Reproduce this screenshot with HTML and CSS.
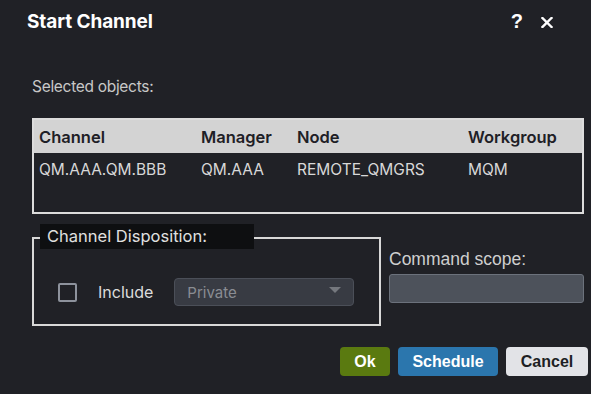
FILE: index.html
```html
<!DOCTYPE html>
<html>
<head>
<meta charset="utf-8">
<link rel="stylesheet" href="styles.css">
</head>
<body>
<div class="dialog">
  <div class="header">
    <div class="title">Start Channel</div>
    <div class="hicons">
      <span class="help">?</span>
      <svg class="close" width="12" height="11" viewBox="0 0 12 11"><path d="M1.5 1 L10.5 10 M10.5 1 L1.5 10" stroke="#fff" stroke-width="2.4" stroke-linecap="square"/></svg>
    </div>
  </div>
  <div class="body">
    <div class="label-sel">Selected objects:</div>
    <div class="table">
      <div class="trow thead">
        <div class="c1">Channel</div><div class="c2">Manager</div><div class="c3">Node</div><div class="c4">Workgroup</div>
      </div>
      <div class="trow tbody">
        <div class="c1">QM.AAA.QM.BBB</div><div class="c2">QM.AAA</div><div class="c3">REMOTE_QMGRS</div><div class="c4">MQM</div>
      </div>
    </div>
    <div class="lower">
      <div class="fieldset">
        <div class="legend">Channel Disposition:</div>
        <div class="disp">
          <span class="checkbox"></span>
          <span class="inc">Include</span>
          <div class="select"><span>Private</span><span class="arrow"></span></div>
        </div>
      </div>
      <div class="scope">
        <div class="scope-label">Command scope:</div>
        <div class="scope-input"></div>
      </div>
    </div>
    <div class="buttons">
      <button class="btn ok">Ok</button>
      <button class="btn sched">Schedule</button>
      <button class="btn cancel">Cancel</button>
    </div>
  </div>
</div>
</body>
</html>
```
FILE: styles.css
```css
html, body {
  margin: 0;
  padding: 0;
  background: #202126;
  width: 591px;
  height: 394px;
  overflow: hidden;
  font-family: Inter, "Noto Sans", sans-serif;
}
.dialog {
  width: 591px;
  height: 394px;
}
.header {
  display: flex;
  justify-content: space-between;
  align-items: center;
  height: 42px;
  padding: 0 38px 0 27px;
}
.title {
  color: #ffffff;
  font-size: 19px;
  font-weight: 700;
  letter-spacing: -0.1px;
}
.hicons {
  display: flex;
  align-items: center;
  gap: 18px;
}
.help {
  color: #fff;
  font-family: "Liberation Sans", sans-serif;
  font-weight: 700;
  font-size: 20px;
}
.close {
  display: block;
  margin-top: 2px;
}
.body {
  padding: 35px 3px 0 32px;
}
.label-sel {
  color: #c8c8c8;
  font-size: 15.5px;
  letter-spacing: -0.3px;
  line-height: 20px;
}
.table {
  margin-top: 21px;
  width: 552px;
  height: 96px;
  box-sizing: border-box;
  border: 2px solid #dcdcdc;
  background: #202126;
}
.trow {
  display: flex;
  align-items: center;
  padding-left: 5px;
}
.thead {
  background: #d3d3d3;
  color: #1e2026;
  font-weight: 600;
  font-size: 16.5px;
  height: 33px;
}
.tbody {
  color: #d8d8d8;
  font-size: 15.5px;
  height: 32px;
}
.c1 { width: 162px; }
.c2 { width: 96px; }
.c3 { width: 171px; }
.c4 { width: 100px; }
.lower {
  display: grid;
  grid-template-columns: 349px 195px;
  column-gap: 8px;
  margin-top: 11px;
}
.fieldset {
  position: relative;
  margin-top: 12px;
  height: 89px;
  box-sizing: border-box;
  border: 2px solid #d8d8d8;
}
.legend {
  position: absolute;
  left: 6px;
  top: -15px;
  width: 214px;
  height: 25px;
  box-sizing: border-box;
  padding-left: 7px;
  background: #0e0f11;
  color: #e0e0e0;
  font-size: 16.5px;
  line-height: 24px;
}
.disp {
  display: flex;
  align-items: center;
  padding: 39px 0 0 24px;
}
.checkbox {
  width: 19px;
  height: 19px;
  box-sizing: border-box;
  border: 2px solid #8d929c;
  border-radius: 2px;
}
.inc {
  margin-left: 21px;
  color: #dcdcdc;
  font-size: 16px;
}
.select {
  margin-left: 21px;
  width: 180px;
  height: 28px;
  box-sizing: border-box;
  border: 1px solid #4b4f58;
  border-radius: 4px;
  background: #383b43;
  display: flex;
  align-items: center;
  justify-content: space-between;
  padding: 0 12px 0 12px;
  color: #8a8d93;
  font-size: 15px;
}
.arrow {
  width: 0;
  height: 0;
  border-left: 6px solid transparent;
  border-right: 6px solid transparent;
  border-top: 6px solid #75787e;
  margin-top: -4px;
}
.scope-label {
  color: #cfcfcf;
  font-family: "Liberation Sans", sans-serif;
  font-size: 17.5px;
  line-height: 20px;
  margin-top: 24px;
}
.scope-input {
  margin-top: 5px;
  height: 29px;
  box-sizing: border-box;
  border: 1px solid #6c727c;
  border-radius: 3px;
  background: #4d525b;
}
.buttons {
  display: flex;
  justify-content: flex-end;
  gap: 8px;
  margin-top: 21px;
}
.btn {
  height: 29px;
  border: none;
  border-radius: 4px;
  font-family: "Liberation Sans", sans-serif;
  font-weight: 700;
  font-size: 16px;
  padding: 0;
}
.ok {
  width: 50px;
  background: #5a7a10;
  color: #ffffff;
}
.sched {
  width: 100px;
  background: #2b76ad;
  color: #ffffff;
}
.cancel {
  width: 82px;
  background: #e2e3e7;
  color: #1d1f24;
}
```
